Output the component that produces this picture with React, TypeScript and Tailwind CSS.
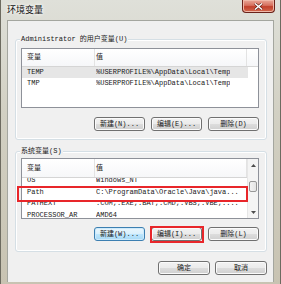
import React from "react";

type Row = { name: string; value: string; selected?: boolean };

const USER_ROWS: Row[] = [
  { name: "TEMP", value: "%USERPROFILE%\\AppData\\Local\\Temp", selected: true },
  { name: "TMP", value: "%USERPROFILE%\\AppData\\Local\\Temp" },
];

const SYSTEM_ROWS: Row[] = [
  { name: "OS", value: "Windows_NT" },
  { name: "Path", value: "C:\\ProgramData\\Oracle\\Java\\java..." },
  { name: "PATHEXT", value: ".COM;.EXE;.BAT;.CMD;.VBS;.VBE;...." },
  { name: "PROCESSOR_AR", value: "AMD64" },
];

function WinButton({
  label,
  focused,
  className,
}: {
  label: string;
  focused?: boolean;
  className?: string;
}) {
  return (
    <div
      className={
        "flex h-[14px] items-center justify-center rounded-[3px] border text-[7px] leading-none text-[#1a1a1a] " +
        (focused
          ? "border-[#3c7fb1] bg-[linear-gradient(#eaf6fd,#d9f0fc_50%,#bee6fd_50%,#a7d9f5)] shadow-[inset_0_0_0_1px_#cdeafb] "
          : "border-[#707070] bg-[linear-gradient(#f2f2f2,#ebebeb_50%,#dddddd_50%,#cfcfcf)] shadow-[inset_0_0_0_1px_#fbfbfb] ") +
        (className ?? "")
      }
    >
      {label}
    </div>
  );
}

function Header({ tall }: { tall?: boolean }) {
  return (
    <div
      className={
        "flex shrink-0 border-b border-[#d5d5d5] bg-[linear-gradient(#ffffff,#f6f7f9)] " +
        (tall ? "h-[19px]" : "h-[18px]")
      }
    >
      <div className="flex w-[73px] items-center border-r border-[#e3e3e3] pl-[5px]">变量</div>
      <div className="flex w-[152px] items-center border-r border-[#e3e3e3] pl-[1px]">值</div>
      <div className="flex-1" />
    </div>
  );
}

function RowLine({ row, h }: { row: Row; h: string }) {
  return (
    <div className={"flex items-center whitespace-nowrap " + h}>
      <div
        className={
          "flex h-full w-[226px] items-center " + (row.selected ? "bg-[#e6e6e6]" : "")
        }
      >
        <span className="w-[74px] pl-[5px]">{row.name}</span>
        <span className="overflow-hidden">{row.value}</span>
      </div>
    </div>
  );
}

function ScrollBar() {
  return (
    <div className="flex w-[11px] shrink-0 flex-col border-l border-[#e6e6e6] bg-[#f4f4f4]">
      <div className="flex h-[12px] items-center justify-center">
        <svg width="5" height="3" viewBox="0 0 5 3">
          <path d="M0 3 L2.5 0 L5 3 Z" fill="#4d4d4d" />
        </svg>
      </div>
      <div className="mt-[10px] mx-[1px] h-[11px] rounded-[2px] border border-[#979797] bg-[linear-gradient(90deg,#f3f3f3,#e4e4e4)]" />
      <div className="flex-1" />
      <div className="flex h-[12px] items-center justify-center">
        <svg width="5" height="3" viewBox="0 0 5 3">
          <path d="M0 0 L2.5 3 L5 0 Z" fill="#4d4d4d" />
        </svg>
      </div>
    </div>
  );
}

export default function App() {
  return (
    <div className="flex h-[284px] w-[281px] flex-col overflow-hidden border-l border-r border-[#6d6b60] bg-[linear-gradient(#dfe0d9,#d2d0c3_40%,#c8c3b2)] font-['Liberation_Mono','Noto_Sans_CJK_SC',monospace] text-[7px] leading-none text-[#1a1a1a]">
      {/* Title bar */}
      <div className="flex h-[20px] shrink-0 items-start justify-between">
        <div className="mt-[5px] pl-[6px] font-['Noto_Sans_CJK_SC',sans-serif] text-[9px] leading-[10px] text-[#111] [text-shadow:0_0_5px_#ffffff,0_0_3px_#ffffff]">
          环境变量
        </div>
        <div className="mr-[5px] flex h-[13px] w-[33px] items-center justify-center rounded-b-[4px] border border-t-0 border-[#6a2219] bg-[linear-gradient(#e9a898,#d6705e_45%,#c2402b_55%,#d26a50)] shadow-[inset_0_0_0_1px_#f0b8a8]">
          <svg width="9" height="7" viewBox="0 0 9 7">
            <path d="M1 0.5 L8 6.5 M8 0.5 L1 6.5" stroke="#5a1a10" strokeWidth="2.6" />
            <path d="M1 0.5 L8 6.5 M8 0.5 L1 6.5" stroke="#ffffff" strokeWidth="1.5" />
          </svg>
        </div>
      </div>

      {/* Client area */}
      <div className="mx-[6px] mb-[2px] flex flex-1 flex-col border border-b-0 border-[#a4a69f] bg-[#f0f0f0] pl-[7px] pr-[6px]">
        {/* User variables */}
        <div className="relative mt-[18px] flex h-[101px] flex-col rounded-[3px] border border-[#d5dfe5] pl-[5px] pr-[7px] pt-[8px] shadow-[inset_0_0_0_1px_#ffffff]">
          <div className="absolute left-[4px] top-[-7px] bg-[#f0f0f0] px-[1px] leading-[12px]">
            Administrator 的用户变量(U)
          </div>
          <div className="flex h-[60px] flex-col overflow-hidden border border-[#8e9199] bg-white">
            <Header />
            {USER_ROWS.map((r) => (
              <RowLine key={r.name} row={r} h="h-[11px]" />
            ))}
          </div>
          <div className="mt-[9px] flex justify-end gap-[6px]">
            <WinButton label="新建(N)..." className="w-[51px]" />
            <WinButton label="编辑(E)..." className="w-[51px]" />
            <WinButton label="删除(D)" className="w-[51px]" />
          </div>
        </div>

        {/* System variables */}
        <div className="relative mt-[11px] flex h-[101px] flex-col rounded-[3px] border border-[#d5dfe5] pl-[5px] pr-[7px] pt-[6px] shadow-[inset_0_0_0_1px_#ffffff]">
          <div className="absolute left-[4px] top-[-7px] bg-[#f0f0f0] px-[1px] leading-[12px]">
            系统变量(S)
          </div>
          <div className="flex h-[61px] overflow-hidden border border-[#8e9199] bg-white">
            <div className="flex flex-1 flex-col overflow-hidden">
              <Header tall />
              <div className="flex-1 overflow-hidden">
                <div className="-mt-[3px]">
                  {SYSTEM_ROWS.map((r) => (
                    <RowLine key={r.name} row={r} h="h-[11.5px]" />
                  ))}
                </div>
              </div>
            </div>
            <ScrollBar />
          </div>
          <div className="mt-[8px] flex justify-end gap-[6px]">
            <WinButton label="新建(W)..." focused className="w-[51px]" />
            <WinButton label="编辑(I)..." className="w-[51px]" />
            <WinButton label="删除(L)" className="w-[51px]" />
          </div>

          {/* highlight marks */}
          <div className="absolute left-[1px] top-[34px] h-[16px] w-[231px] border-2 border-[#e8262a]" />
          <div className="absolute left-[134px] top-[74px] h-[17px] w-[54px] border-2 border-[#e8262a]" />
        </div>

        {/* Dialog buttons */}
        <div className="mt-[9px] flex justify-end gap-[5px] pr-[0px]">
          <WinButton label="确定" className="w-[52px]" />
          <WinButton label="取消" className="w-[52px]" />
        </div>
      </div>
    </div>
  );
}
